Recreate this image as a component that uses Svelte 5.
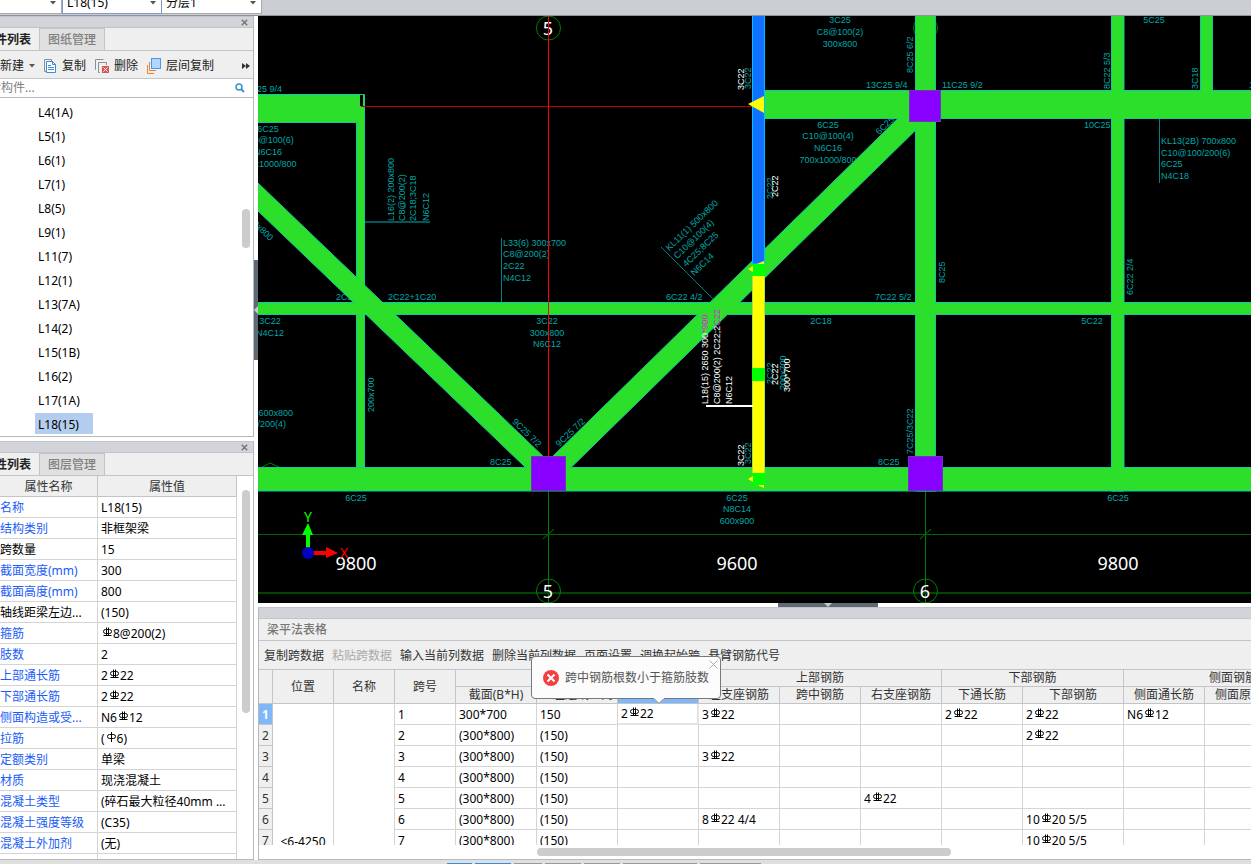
<script lang="ts">
    interface CadText {
        t: string;
        x: number;
        y: number;
        r?: number;
        a?: 'start' | 'middle' | 'end';
    }

    interface Property {
        name: string;
        value: string;
        fixed?: boolean;
    }

    const components = [
        'L4(1A)', 'L5(1)', 'L6(1)', 'L7(1)', 'L8(5)', 'L9(1)', 'L11(7)',
        'L12(1)', 'L13(7A)', 'L14(2)', 'L15(1B)', 'L16(2)', 'L17(1A)', 'L18(15)',
    ];

    let selected = $state('L18(15)');
    let tipOpen = $state(true);

    // '#' stands for the HRB400 bar mark, '$' for the HPB300 one
    const properties: Property[] = [
        { name: '名称', value: 'L18(15)' },
        { name: '结构类别', value: '非框架梁' },
        { name: '跨数量', value: '15', fixed: true },
        { name: '截面宽度(mm)', value: '300' },
        { name: '截面高度(mm)', value: '800' },
        { name: '轴线距梁左边...', value: '(150)', fixed: true },
        { name: '箍筋', value: '#8@200(2)' },
        { name: '肢数', value: '2' },
        { name: '上部通长筋', value: '2#22' },
        { name: '下部通长筋', value: '2#22' },
        { name: '侧面构造或受...', value: 'N6#12' },
        { name: '拉筋', value: '($6)' },
        { name: '定额类别', value: '单梁' },
        { name: '材质', value: '现浇混凝土' },
        { name: '混凝土类型', value: '(碎石最大粒径40mm ...' },
        { name: '混凝土强度等级', value: '(C35)' },
        { name: '混凝土外加剂', value: '(无)' },
        { name: '', value: '' },
    ];

    const actions = [
        '复制跨数据', '粘贴跨数据', '输入当前列数据', '删除当前列数据',
        '页面设置', '调换起始跨', '悬臂钢筋代号',
    ];

    const columnWidths = [14, 61, 61, 61, 81, 81, 81, 81, 81, 81, 81, 101, 81, 81, 57];

    // section, offset, top through, left, mid, right, bottom through, bottom, side through, side, tie
    const spans = [
        ['300*700', '150', '2#22', '3#22', '', '', '2#22', '2#22', 'N6#12', '', ''],
        ['(300*800)', '(150)', '', '', '', '', '', '2#22', '', '', ''],
        ['(300*800)', '(150)', '', '3#22', '', '', '', '', '', '', ''],
        ['(300*800)', '(150)', '', '', '', '', '', '', '', '', ''],
        ['(300*800)', '(150)', '', '', '', '4#22', '', '', '', '', ''],
        ['(300*800)', '(150)', '', '8#22 4/4', '', '', '', '10#20 5/5', '', '', ''],
        ['(300*800)', '(150)', '', '', '', '', '', '10#20 5/5', '', '', ''],
    ];

    const labels: CadText[] = [
        { t: '13C25 9/4', x: 282, y: 93, a: 'end' },
        { t: '6C25', x: 268, y: 133, a: 'middle' },
        { t: 'C10@100(6)', x: 268, y: 144, a: 'middle' },
        { t: 'N6C16', x: 268, y: 156, a: 'middle' },
        { t: '700x1000/800', x: 268, y: 168, a: 'middle' },
        { t: '700x800', x: 269, y: 242, r: 44, a: 'end' },
        { t: 'L16(2) 200x800', x: 395, y: 221, r: -90 },
        { t: 'C8@200(2)', x: 406, y: 221, r: -90 },
        { t: '2C18;3C18', x: 417, y: 221, r: -90 },
        { t: 'N6C12', x: 430, y: 221, r: -90 },
        { t: 'L33(6) 300x700', x: 503, y: 247 },
        { t: 'C8@200(2)', x: 503, y: 258 },
        { t: '2C22', x: 503, y: 270 },
        { t: 'N4C12', x: 503, y: 282 },
        { t: '2C22', x: 336, y: 301 },
        { t: '2C22+1C20', x: 388, y: 301 },
        { t: '3C22', x: 270, y: 325, a: 'middle' },
        { t: 'N4C12', x: 270, y: 337, a: 'middle' },
        { t: '3C22', x: 547, y: 325, a: 'middle' },
        { t: '300x800', x: 547, y: 337, a: 'middle' },
        { t: 'N6C12', x: 547, y: 348, a: 'middle' },
        { t: '200x700', x: 375, y: 412, r: -90 },
        { t: 'KL12(1) 600x800', x: 293, y: 417, a: 'end' },
        { t: 'C10@100/200(4)', x: 286, y: 428, a: 'end' },
        { t: '9C25 7/2', x: 511, y: 423, r: 44 },
        { t: '9C25 7/2', x: 560, y: 448, r: -44 },
        { t: '8C25', x: 490, y: 466 },
        { t: '6C25', x: 356, y: 502, a: 'middle' },
        { t: '3C25', x: 840, y: 24, a: 'middle' },
        { t: 'C8@100(2)', x: 840, y: 36, a: 'middle' },
        { t: '300x800', x: 840, y: 48, a: 'middle' },
        { t: '8C25 6/2', x: 914, y: 73, r: -90 },
        { t: '13C25 9/4', x: 866, y: 89 },
        { t: '11C25 9/2', x: 942, y: 89 },
        { t: '6C25', x: 828, y: 129, a: 'middle' },
        { t: 'C10@100(4)', x: 828, y: 140, a: 'middle' },
        { t: 'N6C16', x: 828, y: 152, a: 'middle' },
        { t: '700x1000/800', x: 828, y: 164, a: 'middle' },
        { t: '6C25', x: 880, y: 136, r: -44 },
        { t: '3C22', x: 752, y: 89, r: -90 },
        { t: '2C22', x: 774, y: 199, r: -90 },
        { t: 'KL11(1) 500x800', x: 670, y: 252, r: -44 },
        { t: 'C10@100(4)', x: 678, y: 260, r: -44 },
        { t: '4C25;8C25', x: 687, y: 268, r: -44 },
        { t: 'N6C14', x: 695, y: 277, r: -44 },
        { t: '6C22 4/2', x: 666, y: 301 },
        { t: '7C22 5/2', x: 875, y: 301 },
        { t: '2C18', x: 821, y: 325, a: 'middle' },
        { t: '5C22', x: 1092, y: 325, a: 'middle' },
        { t: '8C25', x: 946, y: 283, r: -90 },
        { t: '6C22 2/4', x: 1134, y: 295, r: -90 },
        { t: '8C22 5/3', x: 1111, y: 89, r: -90 },
        { t: '3C18', x: 1199, y: 89, r: -90 },
        { t: '5C25', x: 1154, y: 24, a: 'middle' },
        { t: '10C25', x: 1084, y: 129 },
        { t: '11C25', x: 1249, y: 89 },
        { t: 'KL13(2B) 700x800', x: 1161, y: 145 },
        { t: 'C10@100/200(6)', x: 1161, y: 157 },
        { t: '6C25', x: 1161, y: 168 },
        { t: 'N4C18', x: 1161, y: 180 },
        { t: '7C25/3C22', x: 914, y: 454, r: -90 },
        { t: '8C25', x: 878, y: 466 },
        { t: '6C25', x: 1118, y: 502, a: 'middle' },
        { t: '6C25', x: 737, y: 502, a: 'middle' },
        { t: 'N8C14', x: 737, y: 513, a: 'middle' },
        { t: '600x900', x: 737, y: 525, a: 'middle' },
        { t: '3C22', x: 752, y: 464, r: -90 },
        { t: '2C22', x: 774, y: 384, r: -90 },
        { t: '200x700', x: 787, y: 390, r: -90 },
    ];

    const selectedLabels: CadText[] = [
        { t: '3C22', x: 745, y: 90, r: -90 },
        { t: '2C22', x: 779, y: 197, r: -90 },
        { t: '3C22', x: 745, y: 466, r: -90 },
        { t: '2C22', x: 779, y: 385, r: -90 },
        { t: '300*700', x: 791, y: 392, r: -90 },
        { t: 'N6C12', x: 733, y: 404, r: -90 },
    ];

    const axes = [
        { x: 548, y: 28, t: '5' },
        { x: 925, y: 28, t: '' },
        { x: 548, y: 591, t: '5' },
        { x: 925, y: 591, t: '6' },
    ];

    const statusBlocks = [
        { w: 25, on: true }, { w: 36, on: true }, { w: 28, on: false }, { w: 36, on: false },
        { w: 36, on: false }, { w: 74, on: false }, { w: 61, on: false },
    ];

    function place(l: CadText) {
        return `translate(${l.x} ${l.y})` + (l.r ? ` rotate(${l.r})` : '');
    }
</script>

{#snippet rebar(text: string)}
    {#each text.split(/([#$])/) as part}
        {#if part === '#'}
            <svg class="mark" width="12" height="11" viewBox="0 0 12 11" aria-hidden="true">
                <path d="M4.5 2.5H8.5Q10.5 2.5 10.5 4.5T8.5 6.5H4.5Q2.5 6.5 2.5 4.5T4.5 2.5M5.5 .5V9M7.5 .5V9M2.5 8.5H10.5" />
            </svg>
        {:else if part === '$'}
            <svg class="mark" width="12" height="11" viewBox="0 0 12 11" aria-hidden="true">
                <path d="M4.5 2.5H8.5Q10.5 2.5 10.5 4.5T8.5 6.5H4.5Q2.5 6.5 2.5 4.5T4.5 2.5M6.5 0V10" />
            </svg>
        {:else}{part}{/if}
    {/each}
{/snippet}

{#snippet cross()}
    <svg width="7" height="7" viewBox="0 0 7 7" aria-hidden="true">
        <path d="M.8 .8L6.2 6.2M6.2 .8L.8 6.2" fill="none" stroke="#777" stroke-width="1.5" />
    </svg>
{/snippet}

{#snippet caret()}
    <svg class="caret" width="6" height="4" viewBox="0 0 6 4" aria-hidden="true"><path d="M0 0H6L3 3.5Z" fill="#555" /></svg>
{/snippet}

<div class="app">
    <header class="topbar">
        <span class="combo first"><select aria-label="构件类型"><option></option></select>{@render caret()}</span>
        <span class="combo active"><select aria-label="构件"><option>L18(15)</option></select>{@render caret()}</span>
        <span class="combo"><select aria-label="分层"><option>分层1</option></select>{@render caret()}</span>
    </header>

    <main>
        <aside>
            <section class="panel components">
                <div class="strip"><button aria-label="关闭">{@render cross()}</button></div>
                <div class="tabs">
                    <button class="current">构件列表</button>
                    <button>图纸管理</button>
                </div>
                <div class="tools">
                    <button class="new">新建{@render caret()}</button>
                    <button>
                        <svg width="14" height="16" viewBox="0 0 14 16" aria-hidden="true">
                            <path d="M3.5 13.5H1.5V1.5H8.5V3" fill="none" stroke="#8a9099" />
                            <path d="M3.5 3.5H9.5L12.5 6.5V14.5H3.5ZM9.5 3.5V6.5H12.5M5 7.5H8M5 9.5H11M5 11.5H11" fill="#fff" stroke="#3d8ad8" />
                        </svg>
                        复制
                    </button>
                    <button>
                        <svg width="15" height="16" viewBox="0 0 15 16" aria-hidden="true">
                            <path d="M2 11.5H1.5V1.5H9.5M6 14.5H4.5V4.5H12.5V7" fill="none" stroke="#8a9099" />
                            <rect x="8" y="8" width="7" height="7" fill="#d95555" />
                            <path d="M9.5 9.5L13.5 13.5M13.5 9.5L9.5 13.5" stroke="#fff" />
                        </svg>
                        删除
                    </button>
                    <button>
                        <svg width="15" height="16" viewBox="0 0 15 16" aria-hidden="true">
                            <path d="M1.5 7V15.5H8" fill="none" stroke="#ee8233" />
                            <path d="M3.5 4V12.5H10" fill="none" stroke="#ee8233" />
                            <rect x="5.5" y=".5" width="9" height="10" fill="#b3d5fb" stroke="#4a97e8" />
                        </svg>
                        层间复制
                    </button>
                    <button class="more" aria-label="更多">
                        <svg width="8" height="6" viewBox="0 0 8 6" aria-hidden="true"><path d="M0 0L4 3L0 6ZM4 0L8 3L4 6Z" fill="#333" /></svg>
                    </button>
                </div>
                <label class="search">
                    <input type="text" placeholder="搜索构件..." aria-label="搜索构件" />
                    <svg width="10" height="10" viewBox="0 0 10 10" aria-hidden="true">
                        <circle cx="4" cy="4" r="3" fill="none" stroke="#3c93c9" stroke-width="1.5" />
                        <path d="M6.3 6.3L9 9" stroke="#3c93c9" stroke-width="2" />
                    </svg>
                </label>
                <div class="listing">
                    <ul>
                        {#each components as name}
                            <li><button class:selected={name === selected} onclick={() => (selected = name)}>{name}</button></li>
                        {/each}
                    </ul>
                    <div class="track"><i class="thumb list-thumb"></i></div>
                </div>
            </section>

            <section class="panel attributes">
                <div class="strip"><button aria-label="关闭">{@render cross()}</button></div>
                <div class="tabs">
                    <button class="current">属性列表</button>
                    <button>图层管理</button>
                </div>
                <div class="listing">
                    <table class="props">
                        <thead>
                            <tr><th class="name">属性名称</th><th>属性值</th></tr>
                        </thead>
                        <tbody>
                            {#each properties as p}
                                <tr>
                                    <td class="name" class:fixed={p.fixed}>{p.name}</td>
                                    <td>{@render rebar(p.value)}</td>
                                </tr>
                            {/each}
                        </tbody>
                    </table>
                    <div class="track"><i class="thumb prop-thumb"></i></div>
                </div>
            </section>
        </aside>

        <div class="work">
            <div class="view">
                <div class="gutter">
                    <button class="handle" aria-label="折叠侧栏">
                        <svg width="4" height="8" viewBox="0 0 4 8" aria-hidden="true"><path d="M4 0V8L0 4Z" fill="#c5cacf" /></svg>
                    </button>
                </div>
                <svg class="drawing" viewBox="258 16 993 587" preserveAspectRatio="xMinYMin slice" role="img" aria-label="梁平面图">
                    <!-- axis grid and dimension lines -->
                    <g fill="none" stroke="#008000">
                        <path d="M548.5 491V603M925.5 491V603M543 539L554 529M920 539L931 529M262 467L270 463L279 467" />
                        <path d="M258 534.5H2000" stroke="#006400" />
                        <path d="M258 593H2000" stroke="#004600" stroke-width="2" />
                        {#each axes as a}
                            <circle cx={a.x + 0.5} cy={a.y} r="12" />
                        {/each}
                    </g>

                    <g class="cad">
                        {#each labels as l}
                            <text y="-1" transform={place(l)} text-anchor={l.a ?? 'start'}>{l.t}</text>
                        {/each}
                    </g>
                    <path d="M501.5 238V302M661 247L714 300M1159.5 118V183" fill="none" stroke="#008080" />
                    <path d="M364 222H430" stroke="#005858" stroke-width="2" />

                    <g class="edge">
                        <path d="M258 94.5H364.5V467H356.5V122.5H258ZM258 302.5H2000V314.5H258ZM258 467.5H2000V491H258Z" />
                        <path d="M258 183L548 461V489L258 211ZM548 461L925 92V121L548 490Z" />
                        <path d="M765 90.5H2000V118.5H765ZM915.5 10H935.5V491H915.5ZM1111.5 10H1124V491H1111.5ZM1200.5 10H1212.5V90H1200.5Z" />
                    </g>
                    <!-- bodies again without outline so the joints stay clean -->
                    <g fill="#2bdf2b">
                        <path d="M258 95H364V467H357V122H258ZM258 303H2000V314H258ZM258 468H2000V490H258Z" />
                        <path d="M258 184L548 462V488L258 210ZM548 462L925 93V120L548 489Z" />
                        <path d="M765 91H2000V118H765ZM916 10H935V490H916ZM1112 10H1123V490H1112ZM1201 10H1212V92H1201Z" />
                    </g>
                    <rect x="360" y="95" width="3" height="11" fill="#000" />

                    <path d="M361 106.5H753" stroke="#c00000" />

                    <!-- selected beam L18 -->
                    <rect x="752.5" y="10" width="12" height="254" fill="#1070ff" stroke="#00c0ff" />
                    <rect x="753" y="276" width="11" height="197" fill="#ff0" />
                    <path d="M752.5 276V473M764.5 276V473" stroke="#b0e040" />
                    <g fill="#0f0">
                        <rect x="752" y="264" width="13" height="12" />
                        <rect x="752" y="368" width="13" height="13" />
                        <rect x="752" y="473" width="13" height="12" />
                    </g>
                    <path d="M748 104L764 96V113ZM748 269L753 266V272ZM757 264L764 261V264ZM748 479L753 476V482ZM758 485H764V488Z" fill="#ff0" />
                    <path d="M706 406H753" stroke="#fff" stroke-width="2" />
                    <g class="cad chosen">
                        {#each selectedLabels as l}
                            <text y="-1" transform={place(l)}>{l.t}</text>
                        {/each}
                        <text y="-1" transform="translate(709 404) rotate(-90)">L18(15) 2650 300<tspan fill="#e020e0">*900</tspan></text>
                        <text y="-1" transform="translate(721 404) rotate(-90)">C8@200(2) 2C22;2<tspan fill="#e020e0">C22</tspan></text>
                    </g>

                    <g class="dims">
                        <text x="356" y="570">9800</text>
                        <text x="737" y="570">9600</text>
                        <text x="1118" y="570">9800</text>
                        {#each axes as a}
                            <text x={a.x} y={a.y + 7}>{a.t}</text>
                        {/each}
                    </g>
                    <path d="M548.5 10V456" stroke="#f00" />

                    <g fill="#80f" stroke="#6a3bb0">
                        <rect x="909.5" y="90.5" width="31" height="31" />
                        <rect x="531.5" y="456.5" width="34" height="34" />
                        <rect x="908.5" y="456.5" width="34" height="34" />
                    </g>

                    <!-- coordinate tripod -->
                    <path d="M306 548V535H302L308 523L313 535H310V548Z" fill="#0f0" />
                    <path d="M313 551H326V547L338 553L326 558V555H313Z" fill="#f00" />
                    <circle cx="308" cy="553" r="6" fill="#0000c0" />
                    <text class="tripod" x="308" y="522" fill="#0f0">Y</text>
                    <text class="tripod" x="344" y="558" fill="#f00">X</text>
                </svg>
            </div>

            <div class="divider">
                <button class="handle flat" aria-label="折叠表格">
                    <svg width="8" height="4" viewBox="0 0 8 4" aria-hidden="true"><path d="M0 0H8L4 4Z" fill="#c5cacf" /></svg>
                </button>
            </div>

            <section class="panel sheet">
                <div class="strip"></div>
                <h2>梁平法表格</h2>
                <div class="actions">
                    {#each actions as action}
                        <button disabled={action === '粘贴跨数据'}>{action}</button>
                    {/each}
                </div>
                <div class="grid-wrap">
                    <table class="spans">
                        <colgroup>
                            {#each columnWidths as w}<col style={`width: ${w}px`} />{/each}
                        </colgroup>
                        <thead>
                            <tr>
                                <th rowspan="2"></th>
                                <th rowspan="2">位置</th>
                                <th rowspan="2">名称</th>
                                <th rowspan="2">跨号</th>
                                <th colspan="2"></th>
                                <th rowspan="2" class="picked"></th>
                                <th colspan="3">上部钢筋</th>
                                <th colspan="2">下部钢筋</th>
                                <th colspan="3">侧面钢筋</th>
                            </tr>
                            <tr>
                                <th>截面(B*H)</th>
                                <th>距左边线距离</th>
                                <th>左支座钢筋</th>
                                <th>跨中钢筋</th>
                                <th>右支座钢筋</th>
                                <th>下通长筋</th>
                                <th>下部钢筋</th>
                                <th>侧面通长筋</th>
                                <th>侧面原位筋</th>
                                <th>拉筋</th>
                            </tr>
                        </thead>
                        <tbody>
                            {#each spans as row, i}
                                <tr>
                                    <th class:picked={i === 0}>{i + 1}</th>
                                    {#if i === 0}
                                        <td class="place" rowspan={spans.length}>&lt;6-4250</td>
                                        <td rowspan={spans.length}></td>
                                    {/if}
                                    <td>{i + 1}</td>
                                    {#each row as cell, j}
                                        <td class:focus={i === 0 && j === 2}>{@render rebar(cell)}</td>
                                    {/each}
                                </tr>
                            {/each}
                        </tbody>
                    </table>
                </div>
                <div class="hscroll"><i></i></div>

                {#if tipOpen}
                    <div class="tip" role="alert">
                        <svg width="16" height="16" viewBox="0 0 16 16" aria-hidden="true">
                            <circle cx="8" cy="8" r="8" fill="#f04040" />
                            <path d="M4.5 4.5L11.5 11.5M11.5 4.5L4.5 11.5" stroke="#fff" stroke-width="2" />
                        </svg>
                        <span>跨中钢筋根数小于箍筋肢数</span>
                        <button aria-label="关闭提示" onclick={() => (tipOpen = false)}>
                            <svg width="9" height="9" viewBox="0 0 9 9"><path d="M.5 .5L8.5 8.5M8.5 .5L.5 8.5" stroke="#aaa" /></svg>
                        </button>
                        <svg class="tail" width="12" height="7" viewBox="0 0 12 7" aria-hidden="true">
                            <path d="M0 0H12L6 6Z" fill="#fcfcfc" />
                            <path d="M0 .5H1L6 5.5L11 .5H12" fill="none" stroke="#77797c" />
                        </svg>
                    </div>
                {/if}
            </section>
        </div>
    </main>

    <footer>
        {#each statusBlocks as b}
            <i class:on={b.on} style={`width: ${b.w}px`}></i>
        {/each}
    </footer>
</div>

<style>
    :global(body) {
        margin: 0;
        background: #fff;
    }

    .app {
        display: flex;
        flex-direction: column;
        height: 100vh;
        overflow: hidden;
        font-family: "Noto Sans", "Noto Sans CJK SC", sans-serif;
        font-size: 12px;
        line-height: 16px;
        color: #000;

        & *,
        & *::before {
            box-sizing: border-box;
        }
    }

    button,
    input,
    select {
        font: inherit;
        color: inherit;
        border: none;
        background: none;
        padding: 0;
        margin: 0;
    }

    svg {
        flex: none;
    }

    table {
        border-spacing: 0;
        table-layout: fixed;
    }

    th {
        font-weight: 400;
    }

    .topbar {
        display: flex;
        align-items: flex-end;
        height: 16px;
        flex: none;
        padding-bottom: 1px;
        background: #cacdd2;
        border-bottom: 1px solid #8d9598;
    }

    .combo {
        position: relative;
        width: 100px;
        height: 24px;
        flex: none;
        background: #fff;
        border: 1px solid #a9abb0;
        border-left: none;

        &.first {
            width: 62px;
        }

        &.active {
            border: 1px solid #8797c4;
        }

        & select {
            width: 100%;
            height: 100%;
            padding: 2px 0 0 4px;
            appearance: none;
        }

        & .caret {
            position: absolute;
            right: 5px;
            top: 10px;
        }
    }

    main {
        display: flex;
        flex: 1;
        min-height: 0;
    }

    aside {
        display: flex;
        flex-direction: column;
        gap: 4px;
        width: 254px;
        flex: none;
    }

    .panel {
        display: flex;
        flex-direction: column;
        border: 1px solid #b5b8bc;
        border-top-color: #c2c4ca;
        background: #fff;
    }

    aside .panel {
        border-left: none;
        min-height: 0;
    }

    .components {
        flex: 421;
    }

    .attributes {
        flex: 419;
    }

    .strip {
        display: flex;
        justify-content: flex-end;
        align-items: center;
        height: 11px;
        flex: none;
        padding-right: 5px;
        background: #d3d4da;
        border-bottom: 1px solid #c2c4c8;

        & button {
            display: flex;
        }
    }

    .tabs {
        display: flex;
        height: 23px;
        flex: none;
        background: #efefef;
        border-bottom: 1px solid #c2c4c8;

        & button {
            width: 65px;
            padding-top: 1px;
            background: #e0e0e0;
            border-right: 1px solid #c2c4c8;
            border-top: 1px solid #c2c4c8;
            color: #808080;
            font-weight: 500;
            white-space: nowrap;
        }

        & .current {
            display: flex;
            justify-content: flex-end;
            align-items: center;
            width: 40px;
            padding: 2px 8px 0 0;
            overflow: hidden;
            background: #efefef;
            border-top: none;
            color: #222;
            font-weight: 700;
        }
    }

    .tools {
        display: flex;
        align-items: center;
        gap: 8px;
        height: 28px;
        flex: none;
        padding-top: 2px;
        background: #efefef;
        border-bottom: 1px solid #c2c4c8;
        color: #222;

        & button {
            display: flex;
            align-items: center;
            gap: 5px;
            white-space: nowrap;
        }

        & .more {
            margin-left: auto;
            padding-right: 3px;
        }
    }

    .search {
        display: flex;
        align-items: center;
        height: 19px;
        flex: none;
        padding-right: 8px;
        border-bottom: 1px solid #b5b8bc;

        & input {
            flex: 1;
            min-width: 0;
            text-indent: -23px;
            outline: none;
        }

        & input::placeholder {
            color: #808080;
            opacity: 1;
        }
    }

    .listing {
        display: flex;
        flex: 1;
        min-height: 0;
        overflow: hidden;
    }

    ul {
        flex: 1;
        margin: 0;
        padding: 3px 0 0 35px;
        list-style: none;

        & li {
            height: 24px;
        }

        & button {
            height: 21px;
            padding: 2px 3px 0;
            text-align: left;
        }

        & .selected {
            min-width: 58px;
            background: #b2cdee;
        }
    }

    .track {
        width: 11px;
        flex: none;
    }

    .thumb {
        display: block;
        width: 8px;
        border-radius: 4px;
        background: #ccc;
    }

    .list-thumb {
        height: 39px;
        margin-top: 111px;
    }

    .props + .track {
        margin-left: 5px;
    }

    .prop-thumb {
        height: 223px;
        margin-top: 14px;
    }

    .props {
        width: 237px;
        flex: none;
        align-self: flex-start;

        & th,
        & td {
            height: 21px;
            padding: 2px 0 0 3px;
            border-right: 1px solid #d4d4d4;
            border-bottom: 1px solid #d4d4d4;
            white-space: nowrap;
        }

        & th {
            padding-left: 0;
            background: #efefef;
            border-color: #c2c4c8;
            color: #333;
        }

        & .name {
            width: 98px;
            padding-left: 0;
        }

        & td.name {
            color: #1a5cf5;
        }

        & td.fixed {
            color: #000;
        }
    }

    .mark {
        vertical-align: 0;

        & path {
            fill: none;
            stroke: #000;
        }
    }

    .work {
        display: flex;
        flex-direction: column;
        flex: 1;
        min-width: 0;
    }

    .view {
        display: flex;
        flex: 1;
        min-height: 0;
    }

    .gutter {
        display: flex;
        align-items: center;
        width: 4px;
        flex: none;
    }

    .handle {
        display: flex;
        align-items: center;
        justify-content: center;
        width: 4px;
        height: 100px;
        background: #5f6a75;

        &.flat {
            width: 100px;
            height: 4px;
        }
    }

    .drawing {
        flex: 1;
        min-width: 0;
        height: 100%;
        background: #000;
    }

    .cad text {
        font-family: "Liberation Sans", sans-serif;
        font-size: 9px;
        fill: #00a8a8;
    }

    .chosen text {
        fill: #fff;
    }

    .edge path {
        fill: #2bdf2b;
        stroke: #12c8a0;
    }

    .dims text {
        font-size: 18px;
        fill: #fff;
        text-anchor: middle;
    }

    .tripod {
        font-size: 14px;
        text-anchor: middle;
    }

    .divider {
        height: 4px;
        flex: none;
        padding-left: 524px;
    }

    .sheet {
        position: relative;
        flex: none;
        margin-left: 4px;
        border-right: none;

        & h2 {
            height: 22px;
            margin: 0;
            padding: 3px 8px;
            background: #efefef;
            border-bottom: 1px solid #c2c4c8;
            color: #777;
            font-size: 12px;
            font-weight: 500;
        }
    }

    .actions {
        display: flex;
        align-items: center;
        gap: 8px;
        height: 28px;
        padding: 2px 0 0 5px;
        background: #efefef;
        color: #333;

        & button {
            white-space: nowrap;
        }

        & button:disabled {
            color: #aaa;
        }
    }

    .grid-wrap {
        height: 176px;
        overflow: hidden;
        border-top: 1px solid #c2c4c8;
    }

    .spans {
        width: 1084px;

        & th,
        & td {
            height: 21px;
            padding: 2px 0 0 3px;
            border-right: 1px solid #d4d4d4;
            border-bottom: 1px solid #d4d4d4;
            white-space: nowrap;
        }

        & th {
            padding: 2px 0 0;
            background: #efefef;
            border-color: #c2c4c8;
            color: #333;
        }

        & thead th {
            height: 17px;
            padding: 0;
            line-height: 16px;
        }

        & .picked {
            background: #7fb8f8;
            color: #fff;
            font-weight: 700;
        }

        & .place {
            padding: 0;
            text-align: center;
            vertical-align: bottom;
        }

        & .focus {
            padding-top: 1px;
            border-right: 2px solid #e4e4e4;
            border-bottom: 2px solid #e4e4e4;
        }
    }

    .hscroll {
        height: 14px;
        padding: 3px 300px 0 278px;

        & i {
            display: block;
            height: 8px;
            border-radius: 4px;
            background: #ccc;
        }
    }

    .tip {
        position: absolute;
        left: 272px;
        top: 48px;
        display: flex;
        align-items: center;
        gap: 6px;
        width: 190px;
        height: 43px;
        padding-left: 11px;
        background: #fcfcfc;
        border: 1px solid #77797c;
        border-radius: 4px;
        color: #555;

        & span {
            white-space: nowrap;
        }

        & button {
            position: absolute;
            right: 2px;
            top: 3px;
            display: flex;
        }

        & .tail {
            position: absolute;
            left: 121px;
            top: 41px;
        }
    }

    footer {
        display: flex;
        align-items: flex-end;
        gap: 3px;
        height: 4px;
        flex: none;
        padding-left: 447px;
        background: #dfdfdf;

        & i {
            height: 1px;
            background: #999;
        }

        & .on {
            background: #2f8fe5;
        }
    }
</style>
